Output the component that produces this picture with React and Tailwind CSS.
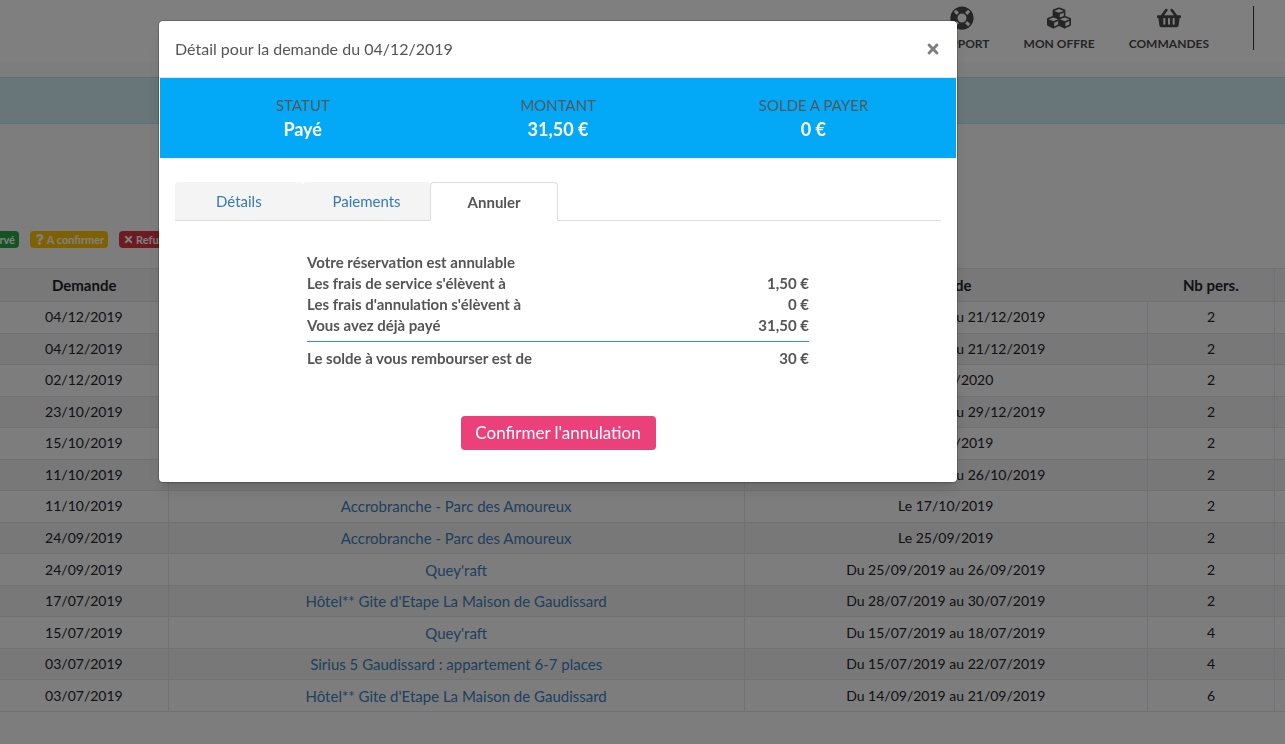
import React, { useState } from 'react';
import { FaCubes, FaLifeRing, FaQuestion, FaShoppingBasket, FaTimes, FaCheck } from 'react-icons/fa';

const navItems = [
  { label: 'SUPPORT', icon: FaLifeRing },
  { label: 'MON OFFRE', icon: FaCubes },
  { label: 'COMMANDES', icon: FaShoppingBasket },
];

const bookings = [
  { date: '04/12/2019', name: '', period: 'Du 14/12/2019 au 21/12/2019', people: 2 },
  { date: '04/12/2019', name: '', period: 'Du 14/12/2019 au 21/12/2019', people: 2 },
  { date: '02/12/2019', name: '', period: 'Le 04/01/2020', people: 2 },
  { date: '23/10/2019', name: '', period: 'Du 22/12/2019 au 29/12/2019', people: 2 },
  { date: '15/10/2019', name: '', period: 'Le 17/10/2019', people: 2 },
  { date: '11/10/2019', name: '', period: 'Du 19/10/2019 au 26/10/2019', people: 2 },
  { date: '11/10/2019', name: 'Accrobranche - Parc des Amoureux', period: 'Le 17/10/2019', people: 2 },
  { date: '24/09/2019', name: 'Accrobranche - Parc des Amoureux', period: 'Le 25/09/2019', people: 2 },
  { date: '24/09/2019', name: "Quey'raft", period: 'Du 25/09/2019 au 26/09/2019', people: 2 },
  { date: '17/07/2019', name: "Hôtel** Gite d'Etape La Maison de Gaudissard", period: 'Du 28/07/2019 au 30/07/2019', people: 2 },
  { date: '15/07/2019', name: "Quey'raft", period: 'Du 15/07/2019 au 18/07/2019', people: 4 },
  { date: '03/07/2019', name: 'Sirius 5 Gaudissard : appartement 6-7 places', period: 'Du 15/07/2019 au 22/07/2019', people: 4 },
  { date: '03/07/2019', name: "Hôtel** Gite d'Etape La Maison de Gaudissard", period: 'Du 14/09/2019 au 21/09/2019', people: 6 },
];

const summary = [
  { label: 'STATUT', value: 'Payé' },
  { label: 'MONTANT', value: '31,50 €' },
  { label: 'SOLDE A PAYER', value: '0 €' },
];

const fees = [
  { label: 'Votre réservation est annulable', amount: '' },
  { label: "Les frais de service s'élèvent à", amount: '1,50 €' },
  { label: "Les frais d'annulation s'élèvent à", amount: '0 €' },
  { label: 'Vous avez déjà payé', amount: '31,50 €' },
];

const tabs = ['Détails', 'Paiements', 'Annuler'];

const Header = () => (
  <header className="h-[62px] bg-white flex justify-end items-start pr-[31px] pt-[6px]">
    <nav className="flex gap-[34px] pr-11">
      {navItems.map(({ label, icon: Icon }) => (
        <a key={label} href="#" className="flex flex-col items-center gap-[6px] text-[#4a4a4a]">
          <Icon className="text-2xl" />
          <span className="text-xs leading-4 font-bold">{label}</span>
        </a>
      ))}
    </nav>
    <div className="w-px h-11 bg-[#333]" />
  </header>
);

const Legend = () => (
  <div className="flex gap-[11px] mt-[107px] -ml-[45px] text-[11px] leading-[17px] font-bold text-white">
    <span className="flex items-center gap-[2px] w-[64px] justify-end px-1 rounded bg-[#28a745]"><FaCheck />Réservé</span>
    <span className="flex items-center justify-center gap-[2px] w-[78px] rounded bg-[#ffc107]"><FaQuestion />A confirmer</span>
    <span className="flex items-center gap-[2px] px-1 rounded bg-[#dc3545]"><FaTimes />Refusé</span>
  </div>
);

const BookingTable = () => (
  <table className="w-full h-[444px] mt-5 table-fixed border-collapse text-center text-sm leading-5 text-[#212529]">
    <colgroup>
      <col className="w-[13.1%]" />
      <col className="w-[44.8%]" />
      <col className="w-[31.4%]" />
      <col className="w-[9.9%]" />
      <col />
    </colgroup>
    <thead>
      <tr className="h-[33px] bg-[#f0f0f0] border-y border-[#dee2e6] text-[15px]">
        <th>Demande</th>
        <th></th>
        <th>Période</th>
        <th className="border-r border-[#dee2e6]">Nb pers.</th>
        <th></th>
      </tr>
    </thead>
    <tbody>
      {bookings.map((b, i) => (
        <tr key={i} className="border-b border-[#dee2e6] even:bg-[#f0f0f0]">
          <td className="border-r border-[#dee2e6]">{b.date}</td>
          <td className="border-r border-[#dee2e6] text-[15px]">
            {b.name && <a href="#" className="text-[#4080ba]">{b.name}</a>}
          </td>
          <td className="border-r border-[#dee2e6]">{b.period}</td>
          <td className="border-r border-[#dee2e6]">{b.people}</td>
          <td></td>
        </tr>
      ))}
    </tbody>
  </table>
);

const CancelPanel = () => (
  <div className="flex flex-col items-center px-[132px] pt-[31px] pb-8">
    <div className="w-full text-[15px] leading-[21px] font-bold text-[#555]">
      {fees.map((fee) => (
        <div key={fee.label} className="flex justify-between">
          <span>{fee.label}</span>
          <span>{fee.amount}</span>
        </div>
      ))}
      <div className="flex justify-between mt-[5px] pt-[6px] border-t border-[#2a98bd]">
        <span>Le solde à vous rembourser est de</span>
        <span>30 €</span>
      </div>
    </div>
    <button className="mt-[47px] h-[34px] w-[195px] rounded bg-[#ec407a] text-[17px] text-white">
      Confirmer l'annulation
    </button>
  </div>
);

const DetailModal = () => {
  const [active, setActive] = useState('Annuler');

  return (
    <div role="dialog" className="w-full max-w-[800px] bg-white bg-clip-padding rounded-[5px] border border-black/20 shadow-lg text-[#555]">
      <div className="flex items-center justify-between h-[57px] px-4 border-b border-[#e5e5e5]">
        <h4 className="text-base">Détail pour la demande du 04/12/2019</h4>
        <button aria-label="Fermer" className="text-base text-[#7f7f7f]">
          <FaTimes />
        </button>
      </div>

      <div className="mx-px px-[15px] pt-[15px] pb-[17px] grid grid-cols-3 text-center bg-[#03a9f7]">
        {summary.map((s) => (
          <div key={s.label}>
            <div className="text-[15px] leading-6">{s.label}</div>
            <div className="text-lg leading-6 font-bold text-white">{s.value}</div>
          </div>
        ))}
      </div>

      <div className="px-4 pt-6">
        <div role="tablist" className="flex text-[15px] leading-5">
          {tabs.map((tab) => (
            <button
              key={tab}
              role="tab"
              aria-selected={tab === active}
              onClick={() => setActive(tab)}
              className={
                tab === active
                  ? 'w-1/6 h-[39px] rounded-t border border-b-white border-[#ddd] font-bold'
                  : 'w-1/6 h-[39px] rounded-t border-b border-[#ddd] bg-[#f4f4f4] text-[#337ab7]'
              }
            >
              {tab}
            </button>
          ))}
          <div className="flex-1 border-b border-[#ddd]" />
        </div>
        <CancelPanel />
      </div>
    </div>
  );
};

const App = () => (
  <div className="min-h-screen overflow-hidden bg-[#fafafa] font-['Lato',sans-serif]">
    <Header />
    <div className="mt-[15px] h-[47px] border-y border-[#bce0ec] bg-[#d1eaf3]" />
    <Legend />
    <BookingTable />
    <div className="fixed inset-0 flex items-start justify-center bg-black/50 pt-5 pr-[169px]">
      <DetailModal />
    </div>
  </div>
);

export default App;
